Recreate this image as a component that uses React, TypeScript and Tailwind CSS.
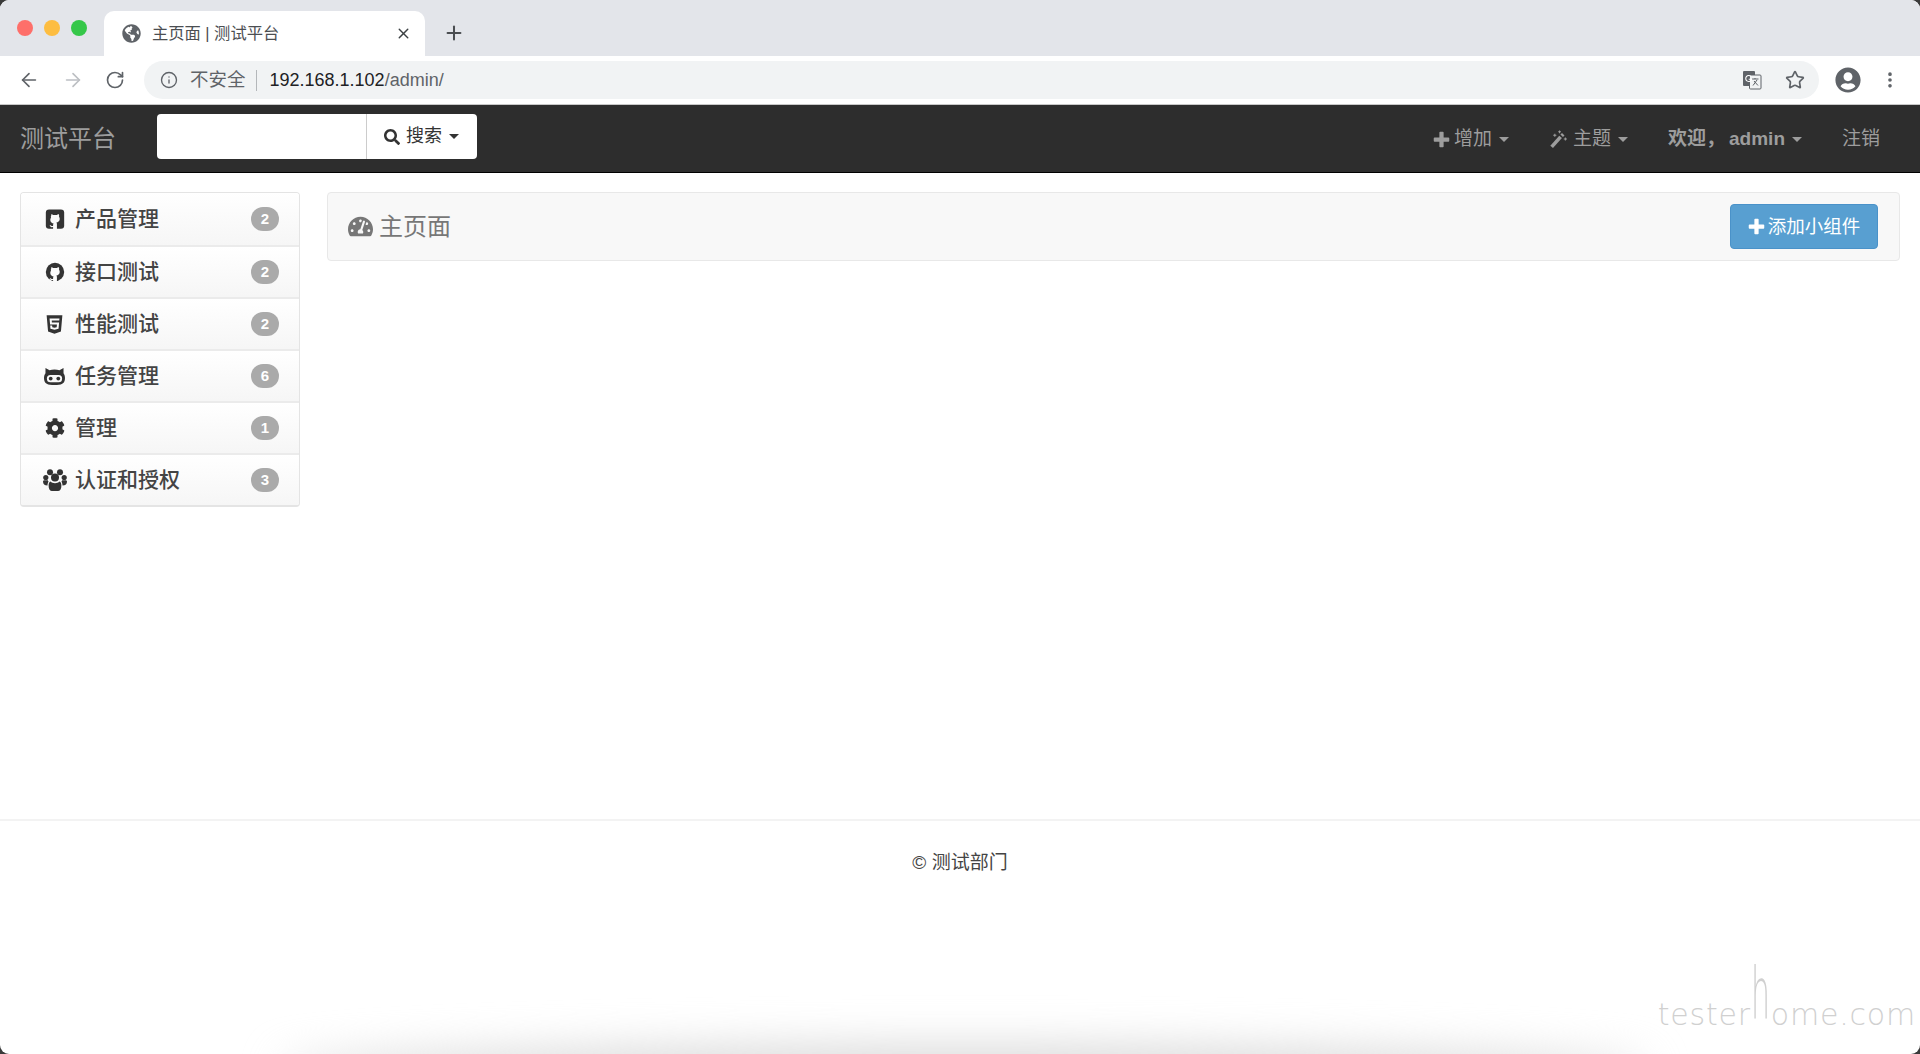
import { ArrowLeft, ArrowRight, Info, MoreVertical, Plus, RotateCw, Star, X } from "lucide-react";
import { FaCog, FaGlobeAmericas, FaHtml5, FaSearch, FaTachometerAlt, FaUserCircle } from "react-icons/fa";

// the white cat head that is cut out of both github icons
const catCutout = "M8 6.5l2.2 1.2h3.6L16 6.5c.6 1.2.7 2.2.4 3.1.7.9.9 1.9.7 3-.3 2-1.800 3-3.600 3.300.4.500.6 1 .6 1.600V23H9.900v-2.200c-1.600.3-3-.2-3.800-1.800l1.400-.3c.6 1 1.400 1.100 2.400.8v-.9c0-.6.2-1.100.6-1.600-1.800-.3-3.300-1.300-3.600-3.300-.2-1.100 0-2.100.7-3-.3-.9-.2-1.900.4-3.100z";

const GithubSquareIcon = () => (
  <svg viewBox="0 0 24 24" className="h-[22px] w-[22px]">
    <rect x="2" y="1.500" width="20" height="21" rx="3.500" fill="#333" />
    <path d={catCutout} fill="#fafafa" />
  </svg>
);

const GithubIcon = () => (
  <svg viewBox="0 0 24 24" className="h-[22px] w-[22px]">
    <circle cx="12" cy="12" r="10" fill="#333" />
    <path d={catCutout} fill="#fafafa" />
  </svg>
);

const GithubAltIcon = () => (
  <svg viewBox="0 0 24 20" className="h-[19px] w-[23px]">
    <path d="M2.500 1l4.300 2.300c1.500-.4 3.400-.6 5.200-.6s3.700.2 5.200.6L21.500 1v5.500c1.200 1.500 1.700 3.500 1.500 6-.4 4.800-3.700 6.500-11 6.500S1.400 17.300 1 12.500c-.2-2.500.3-4.500 1.500-6z" fill="#333" />
    <rect x="4" y="8.500" width="16" height="7.500" rx="3.700" fill="#fafafa" />
    <circle cx="8" cy="12.200" r="2" fill="#333" />
    <circle cx="16" cy="12.200" r="2" fill="#333" />
  </svg>
);

const UsersIcon = () => (
  <svg viewBox="0 0 24 22" fill="#333" className="h-[22px] w-[24px]">
    <circle cx="7" cy="3.200" r="3" />
    <circle cx="17" cy="3.200" r="3" />
    <circle cx="2.800" cy="8.500" r="2.600" />
    <circle cx="21.200" cy="8.500" r="2.600" />
    <circle cx="12" cy="8.500" r="4" />
    <path d="M0 12.500c0-.9.800-1.300 1.800-1.300h3l.7 1.400C4.800 14 4.600 15 4.500 16.500 1.500 16.500 0 15 0 12.500zM24 12.500c0-.9-.8-1.300-1.800-1.300h-3l-.7 1.400c.7 1.400.9 2.400 1 3.900 3 0 4.500-1.500 4.500-4zM7.500 12.500c1 1.200 2.800 1.700 4.500 1.700s3.500-.5 4.500-1.700c1.300.6 1.900 2 1.900 4.200 0 3.500-1.500 5.300-3.400 5.300H9c-1.900 0-3.400-1.800-3.400-5.300 0-2.200.6-3.600 1.900-4.200z" />
  </svg>
);

const CogIcon = () => <FaCog size={20} color="#333" />;
const Html5Icon = () => <FaHtml5 size={21} color="#333" />;

const PlusIcon = ({ className }: { className: string }) => (
  <svg viewBox="0 0 16 16" fill="currentColor" className={className}>
    <path d="M6 1.500c0-.5.300-.8.800-.8h2.400c.5 0 .8.300.8.800V6h4.500c.5 0 .8.300.8.800v2.400c0 .5-.3.800-.8.800H10v4.500c0 .5-.3.800-.8.800H6.800c-.5 0-.8-.3-.8-.8V10H1.500c-.5 0-.8-.3-.8-.8V6.800c0-.5.300-.8.800-.8H6z" />
  </svg>
);

const WandIcon = () => (
  <svg viewBox="0 0 18 18" fill="none" stroke="currentColor" className="h-[19px] w-[19px]">
    <path d="M2.500 16l8.500-9.500" strokeWidth="3.400" />
    <path d="M12 5.500l1.500-1.500" strokeWidth="3.400" />
    <path d="M5.500 3.500v3M4 5h3M15.500 7v3M14 8.500h3M10 .5v2.500M8.700 1.700h2.600" strokeWidth="1" />
  </svg>
);

const TranslateIcon = () => (
  <svg viewBox="0 0 20 20" className="h-[20px] w-[20px]">
    <rect x="1" y="1" width="12" height="15" rx="1" fill="#5f6368" />
    <rect x="7.500" y="5" width="11.500" height="14" rx="1" fill="#f1f3f4" stroke="#5f6368" strokeWidth="1" />
    <path d="M10 9h6.500M13 8v1M11 15.500l4-5.500M12 11l4 4.500" stroke="#5f6368" strokeWidth="1" fill="none" />
    <path d="M9 6.500a3 3 0 1 0 .6 2.800H6.700" stroke="#fff" strokeWidth="1.100" fill="none" />
  </svg>
);

const menuItems = [
  { name: "产品管理", count: 2, icon: GithubSquareIcon },
  { name: "接口测试", count: 2, icon: GithubIcon },
  { name: "性能测试", count: 2, icon: Html5Icon },
  { name: "任务管理", count: 6, icon: GithubAltIcon },
  { name: "管理", count: 1, icon: CogIcon },
  { name: "认证和授权", count: 3, icon: UsersIcon },
];

const Caret = ({ className = "border-t-[#9d9d9d]" }: { className?: string }) => (
  <span className={`ml-[7px] inline-block h-0 w-0 border-x-[5px] border-t-[5px] border-x-transparent ${className}`} />
);

const BrowserChrome = () => (
  <div className="shrink-0">
    {/* Tab strip */}
    <div className="flex h-[56px] items-end rounded-t-[9px] bg-[#e3e5ea]">
      <div className="mb-[20px] ml-[17px] flex gap-[11px]">
        <span className="h-4 w-4 rounded-full bg-[#fe6f6a]" />
        <span className="h-4 w-4 rounded-full bg-[#fdbd41]" />
        <span className="h-4 w-4 rounded-full bg-[#35c749]" />
      </div>
      <div className="ml-[17px] flex h-[45px] w-[321px] items-center rounded-t-[10px] bg-white pl-[18px] pr-[13px]">
        <FaGlobeAmericas size={19} className="shrink-0 text-[#5f6368]" />
        <span className="ml-[11px] flex-1 text-[16.300px] text-[#4b4e52]">主页面 | 测试平台</span>
        <X size={17} strokeWidth={2} className="text-[#3c4043]" />
      </div>
      <Plus size={22} strokeWidth={2.200} className="mb-[12px] ml-[18px] text-[#4a4d51]" />
    </div>

    {/* Address bar */}
    <div className="flex h-[49px] items-center border-b border-[#c8c8c8] bg-white">
      <ArrowLeft size={22} strokeWidth={1.800} className="ml-[18px] text-[#5f6368]" />
      <ArrowRight size={22} strokeWidth={1.800} className="ml-[22px] text-[#bcbfc3]" />
      <RotateCw size={20} strokeWidth={2} className="ml-[21px] text-[#5f6368]" />
      <div className="ml-[19px] flex h-[38px] w-[1675px] items-center rounded-full bg-[#f1f3f4] pl-[16px]">
        <Info size={18} strokeWidth={1.800} className="text-[#5f6368]" />
        <span className="ml-[12px] text-[18.500px] text-[#5f6368]">不安全</span>
        <span className="ml-[10px] h-[21px] w-px bg-[#b4b7ba]" />
        <span className="ml-[13px] text-[18px]">
          <span className="text-[#202124]">192.168.1.102</span>
          <span className="text-[#5f6368]">/admin/</span>
        </span>
        <span className="ml-auto">
          <TranslateIcon />
        </span>
        <Star size={20} strokeWidth={2} className="ml-[23px] mr-[14px] text-[#5f6368]" />
      </div>
      <FaUserCircle size={26} className="ml-[16px] text-[#5f6368]" />
      <MoreVertical size={20} strokeWidth={2.400} className="ml-[19px] text-[#5f6368]" />
    </div>
  </div>
);

const Navbar = () => (
  <nav className="flex h-[68px] shrink-0 items-center border-b border-b-black bg-[#2d2d2d] pl-[20px] text-[19px] text-[#9d9d9d]">
    <span className="text-[24px]">测试平台</span>
    <div className="mb-[5px] ml-[41px] flex h-[45px] w-[320px] overflow-hidden rounded-[4px] bg-white text-[18px] text-[#333]">
      <div className="w-[210px] border-r border-[#ccc]" />
      <div className="flex flex-1 items-center pl-[17px] pt-[1px]">
        <FaSearch size={16} />
        <span className="ml-[6px]">搜索</span>
        <Caret className="border-t-[#333]" />
      </div>
    </div>

    <div className="ml-auto flex items-center pr-[40px] pt-[2px]">
      <span className="flex items-center">
        <PlusIcon className="h-[17px] w-[17px]" />
        <span className="ml-[4px]">增加</span>
        <Caret />
      </span>
      <span className="ml-[40px] flex items-center">
        <WandIcon />
        <span className="ml-[5px]">主题</span>
        <Caret />
      </span>
      <span className="ml-[40px] flex items-center font-semibold">
        <span>欢迎，</span>
        <span className="ml-[4px]">admin</span>
        <Caret />
      </span>
      <span className="ml-[40px]">注销</span>
    </div>
  </nav>
);

const Sidebar = () => (
  <aside className="w-[280px] self-start overflow-hidden rounded-[4px] border border-b-[2px] border-[#e4e4e4]">
    {menuItems.map((item, index) => (
      <div
        key={item.name}
        className={`flex h-[52px] items-center bg-gradient-to-b from-white to-[#f6f6f6] ${
          index > 0 ? "border-t-[2px] border-[#ebebeb]" : ""
        }`}
      >
        <span className="ml-[13px] flex w-[41px] justify-center">
          <item.icon />
        </span>
        <span className="flex-1 text-[21px] font-medium text-[#444]">{item.name}</span>
        <span className="mr-[20px] flex h-[24px] w-[28px] items-center justify-center rounded-full bg-[#aaa] text-[15px] font-bold text-white">
          {item.count}
        </span>
      </div>
    ))}
  </aside>
);

const App = () => (
  <div
    className="relative flex h-[1054px] w-full flex-col overflow-hidden bg-[#3a3a3a]"
    style={{ fontFamily: '"Liberation Sans", "Noto Sans CJK SC", sans-serif' }}
  >
    <div className="flex h-full flex-col rounded-[9px] bg-white">
      <BrowserChrome />
      <Navbar />

      <main className="flex h-[646px] shrink-0 gap-[27px] pl-[20px] pr-[20px] pt-[19px]">
        <Sidebar />
        <section className="flex h-[69px] flex-1 items-center justify-between rounded-[4px] border border-[#e8e8e8] bg-[#f8f8f8] pl-[20px] pr-[21px]">
          <div className="flex items-center text-[#777]">
            <FaTachometerAlt size={25} />
            <span className="ml-[6px] text-[24px]">主页面</span>
          </div>
          <button className="flex h-[45px] w-[148px] items-center justify-center rounded-[4px] border border-[#4a92c9] bg-[#589fd1] text-[18.500px] text-white">
            <PlusIcon className="h-[17px] w-[17px]" />
            <span className="ml-[3px]">添加小组件</span>
          </button>
        </section>
      </main>

      <footer className="flex-1 border-t-[2px] border-[#f3f3f3] pt-[28px] text-center text-[19px] text-[#444]">
        © 测试部门
      </footer>
    </div>

    {/* Window shadow along the bottom edge */}
    <div className="pointer-events-none absolute bottom-[-40px] left-[280px] right-[270px] h-[50px] rounded-[50%] bg-[#dcdcdc] blur-[20px]" />

    {/* Watermark */}
    <div
      className="pointer-events-none absolute bottom-[24px] right-[4px] text-[30px] leading-none tracking-[0.800px] text-[#d0d0d0]"
      style={{ fontFamily: '"DejaVu Sans", sans-serif', fontWeight: 200 }}
    >
      tester<span className="inline-block origin-bottom scale-y-[2.400]">h</span>ome.com
    </div>
  </div>
);

export default App;
